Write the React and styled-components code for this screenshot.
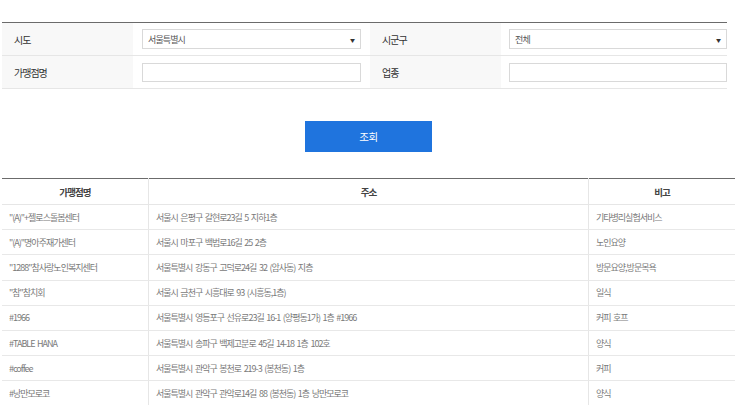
import React from 'react'
import styled, { createGlobalStyle } from 'styled-components'

const GlobalStyle = createGlobalStyle`
  html, body { margin: 0; padding: 0; background: #fff; }
  body { font-family: "Noto Sans CJK KR", "Noto Sans", sans-serif; color: #333; }
`

const rows = [
  ['"(A)"+젤로스돌봄센터', '서울시 은평구 갈현로23길 5 지하1층', '기타병리실험서비스'],
  ['"(A)"명아주재가센터', '서울시 마포구 백범로16길 25 2층', '노인요양'],
  ['"1288"참사랑노인복지센터', '서울특별시 강동구 고덕로24길 32 (암사동) 지층', '방문요양,방문목욕'],
  ['"참"참치회', '서울시 금천구 시흥대로 93 (시흥동,1층)', '일식'],
  ['#1966', '서울특별시 영등포구 선유로23길 16-1 (양평동1가) 1층 #1966', '커피 호프'],
  ['#TABLE HANA', '서울특별시 송파구 백제고분로 45길 14-18 1층 102호', '양식'],
  ['#coffee', '서울특별시 관악구 봉천로 219-3 (봉천동) 1층', '커피'],
  ['#낭만모로코', '서울특별시 관악구 관악로14길 88 (봉천동) 1층 낭만모로코', '양식'],
]

const App = () => {
  return (
    <>
      <GlobalStyle />
      <Page>
        <SearchForm>
          <FormRow>
            <Label>시도</Label>
            <Field><Select value="서울특별시" /></Field>
            <Label>시군구</Label>
            <Field $last><Select value="전체" /></Field>
          </FormRow>
          <FormRow>
            <Label>가맹점명</Label>
            <Field><Input /></Field>
            <Label>업종</Label>
            <Field $last><Input /></Field>
          </FormRow>
        </SearchForm>
        <ButtonBar>
          <SearchButton>조회</SearchButton>
        </ButtonBar>
        <Results>
          <thead>
            <tr>
              <Th style={{ width: 146 }}>가맹점명</Th>
              <Th>주소</Th>
              <Th style={{ width: 146 }}>비고</Th>
            </tr>
          </thead>
          <tbody>
            {rows.map((r, i) => (
              <tr key={i}>
                <Td>{r[0]}</Td>
                <Td>{r[1]}</Td>
                <Td>{r[2]}</Td>
              </tr>
            ))}
          </tbody>
        </Results>
      </Page>
    </>
  )
}

const Select = ({ value }) => (
  <SelectBox>
    <span>{value}</span>
    <Arrow>▼</Arrow>
  </SelectBox>
)

export default App

const Page = styled.div`
  padding: 22px 8px 0 2px;
  width: 733px;
`

const SearchForm = styled.div`
  width: 725px;
  border-top: 1px solid #6b6b6b;
`

const FormRow = styled.div`
  display: grid;
  grid-template-columns: 131px 237px 131px 1fr;
  height: 33px;
  border-bottom: 1px solid #e6e6e6;
  box-sizing: border-box;
`

const Label = styled.div`
  background: #f8f8f8;
  display: flex;
  align-items: center;
  padding-left: 12px;
  font-size: 10px;
  letter-spacing: -1px;
  word-spacing: 1px;
  color: #333;
`

const Field = styled.div`
  display: flex;
  align-items: center;
  padding: 0 ${p => (p.$last ? '0' : '9px')} 0 ${p => (p.$last ? '8px' : '9px')};
`

const SelectBox = styled.div`
  flex: 1;
  height: 20px;
  box-sizing: border-box;
  border: 1px solid #d9d9d9;
  display: flex;
  align-items: center;
  justify-content: space-between;
  padding: 0 5px 0 5px;
  font-size: 9px;
  letter-spacing: -0.9px;
  color: #555;
`

const Arrow = styled.span`
  font-size: 5px;
  color: #333;
  letter-spacing: 0;
`

const Input = styled.div`
  flex: 1;
  height: 19px;
  box-sizing: border-box;
  border: 1px solid #d9d9d9;
`

const ButtonBar = styled.div`
  display: flex;
  justify-content: center;
  padding: 32px 0 26px;
`

const SearchButton = styled.button`
  width: 127px;
  height: 31px;
  border: none;
  background: #1f74de;
  color: #fff;
  font-family: "Noto Sans CJK KR", sans-serif;
  font-size: 10.5px;
  letter-spacing: -0.5px;
`

const Results = styled.table`
  width: 733px;
  border-collapse: collapse;
  border-top: 1px solid #6b6b6b;
  table-layout: fixed;
`

const Th = styled.th`
  height: 25px;
  padding: 0;
  font-weight: 700;
  font-size: 9.5px;
  letter-spacing: -0.9px;
  color: #444;
  border-bottom: 1px solid #e6e6e6;
  border-left: 1px solid #e6e6e6;
  &:first-child { border-left: none; }
`

const Td = styled.td`
  height: 25.2px;
  box-sizing: border-box;
  padding: 0 0 0 7px;
  font-size: 9px;
  letter-spacing: -1px;
  word-spacing: 1.5px;
  color: #7a7a7a;
  white-space: nowrap;
  overflow: hidden;
  border-bottom: 1px solid #e8e8e8;
  border-left: 1px solid #e6e6e6;
  &:first-child { border-left: none; }
`
